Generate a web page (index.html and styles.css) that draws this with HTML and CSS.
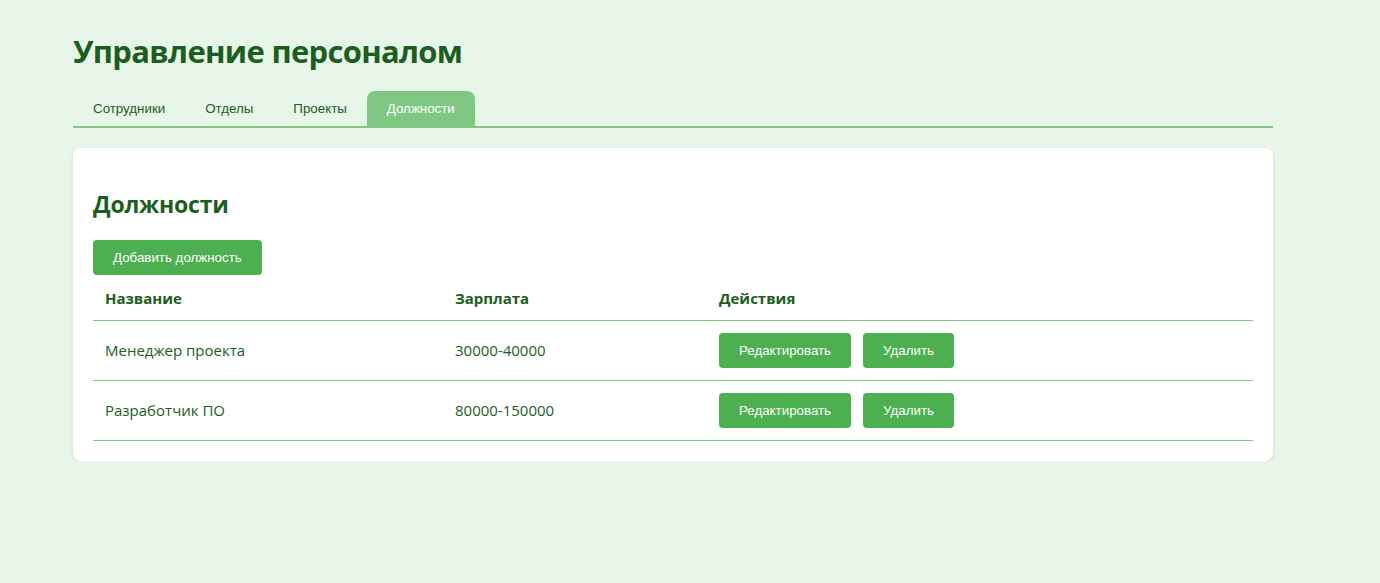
FILE: index.html
```html
<!DOCTYPE html>
<html lang="ru">
<head>
<meta charset="utf-8">
<title>Управление персоналом</title>
<link rel="stylesheet" href="styles.css">
</head>
<body>
<div class="app">
  <h1 class="title">Управление персоналом</h1>
  <nav class="tabs">
    <button class="tab">Сотрудники</button>
    <button class="tab">Отделы</button>
    <button class="tab">Проекты</button>
    <button class="tab active">Должности</button>
  </nav>
  <section class="card">
    <h2 class="card-title">Должности</h2>
    <button class="btn">Добавить должность</button>
    <table class="table">
      <thead>
        <tr><th class="col-name">Название</th><th class="col-salary">Зарплата</th><th>Действия</th></tr>
      </thead>
      <tbody>
        <tr>
          <td>Менеджер проекта</td><td>30000-40000</td>
          <td><div class="actions"><button class="btn">Редактировать</button><button class="btn">Удалить</button></div></td>
        </tr>
        <tr>
          <td>Разработчик ПО</td><td>80000-150000</td>
          <td><div class="actions"><button class="btn">Редактировать</button><button class="btn">Удалить</button></div></td>
        </tr>
      </tbody>
    </table>
  </section>
</div>
</body>
</html>
```
FILE: styles.css
```css
* { box-sizing: border-box; }
html, body { margin: 0; padding: 0; }
body {
  background: #e8f5e9;
  color: #1b5e20;
  font-family: "Open Sans", "Noto Sans", sans-serif;
}
.app {
  width: 1200px;
  margin-left: 73px;
  padding-top: 27px;
}
.title {
  margin: 0 0 16px;
  font-size: 31px;
  line-height: 48px;
  letter-spacing: -0.7px;
  font-weight: 700;
  color: #1b5e20;
}
.tabs {
  display: flex;
  border-bottom: 2px solid #81c784;
}
.tab {
  font-family: "Liberation Sans", Arial, sans-serif;
  font-size: 13.33px;
  height: 35px;
  padding: 0 20px;
  border: none;
  background: transparent;
  color: #1b5e20;
  border-radius: 8px 8px 0 0;
}
.tab.active {
  background: #81c784;
  color: #fff;
}
.card {
  margin-top: 20px;
  background: #fff;
  border-radius: 8px;
  padding: 20px;
  box-shadow: 0 2px 4px rgba(0, 0, 0, 0.1);
}
.card-title {
  margin: 20px 0 19px;
  font-size: 23px;
  line-height: 33px;
  letter-spacing: -0.2px;
  font-weight: 700;
}
.btn {
  font-family: "Liberation Sans", Arial, sans-serif;
  font-size: 13.33px;
  height: 35px;
  padding: 0 20px;
  border: none;
  border-radius: 4px;
  background: #4caf50;
  color: #fff;
}
.table {
  width: 100%;
  margin-top: 5px;
  border-collapse: collapse;
}
.table tr { border-bottom: 1px solid #81c784; }
.table th, .table td {
  text-align: left;
  padding: 0 12px;
  font-size: 15px;
}
.table th {
  font-weight: 700;
  height: 40px;
  line-height: 16px;
  padding-bottom: 4px;
}
.table td { height: 60px; }
.col-name { width: 350px; }
.col-salary { width: 264px; }
.actions { display: flex; gap: 12px; }
```
